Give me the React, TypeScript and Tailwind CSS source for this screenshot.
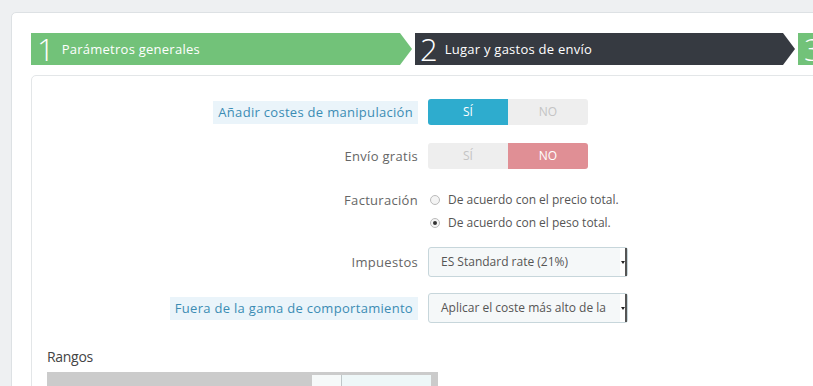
import { ReactNode } from 'react';

const font = { fontFamily: '"Open Sans", "Liberation Sans", sans-serif' };

function Step({ n, label, dark, last }: { n: string; label: string; dark?: boolean; last?: boolean }) {
  const bg = dark ? 'bg-[#363a41]' : 'bg-[#72c279]';
  const tri = dark ? 'border-l-[#363a41]' : 'border-l-[#72c279]';
  return (
    <div className="flex h-[32px] shrink-0">
      <div className={`flex items-center ${bg} ${last ? 'w-[40px] pl-[6px]' : dark ? 'w-[368px] pl-[5px]' : 'w-[369px] pl-[6px]'} text-white`}>
        <span className="text-[31px] font-light leading-none">{n}</span>
        {label && <span className="ml-[7px] text-[13px] leading-none tracking-[0.25px]">{label}</span>}
      </div>
      {!last && (
        <div className={`h-0 w-0 border-y-[16px] border-y-transparent border-l-[12px] ${tri}`} />
      )}
    </div>
  );
}

function Label({ children, hint }: { children: ReactNode; hint?: boolean }) {
  return (
    <div className="flex w-[386px] shrink-0 justify-end tracking-[0.3px]">
      {hint ? (
        <span className="bg-[#eaf4fa] px-[5px] py-[3px] leading-[17px] text-[#3b8cb4]">{children}</span>
      ) : (
        <span className="leading-[20px] text-[#666]">{children}</span>
      )}
    </div>
  );
}

function Toggle({ yes }: { yes: boolean }) {
  return (
    <div className="ml-[10px] flex h-[26px] w-[160px] overflow-hidden rounded-[3px] text-[12px]">
      <div
        className={`flex w-[80px] items-center justify-center ${yes ? 'bg-[#2eacce] text-white' : 'bg-[#eee] text-[#c4c4c4]'}`}
      >
        SÍ
      </div>
      <div
        className={`flex w-[80px] items-center justify-center ${yes ? 'bg-[#eee] text-[#c4c4c4]' : 'bg-[#e08f95] text-white'}`}
      >
        NO
      </div>
    </div>
  );
}

function Radio({ checked, children }: { checked?: boolean; children: ReactNode }) {
  return (
    <div className="flex h-[23px] items-center text-[12px] text-[#555]">
      <span className="ml-[2px] flex h-[10px] w-[10px] items-center justify-center rounded-full border border-[#bbb] bg-[#f4f4f4]">
        {checked && <span className="h-[4px] w-[4px] rounded-full bg-[#333]" />}
      </span>
      <span className="ml-[8px]">{children}</span>
    </div>
  );
}

function Select({ value }: { value: string }) {
  return (
    <div className="relative ml-[10px] flex h-[30px] w-[200px] items-center rounded-[3px] border border-[#c7d6db] bg-[#f5f8f9] pl-[12px] text-[12px] text-[#555]">
      {value}
      <div className="absolute right-0 top-0 flex h-full w-[7px] items-center justify-center border-r-2 border-[#555] bg-white">
        <div className="h-0 w-0 border-x-[2px] border-t-[3px] border-x-transparent border-t-[#222]" />
      </div>
    </div>
  );
}

export default function App() {
  return (
    <div className="h-[386px] w-[813px] overflow-hidden bg-[#eef0f2] pl-[11px] pt-[12px] text-[13px]" style={font}>
      <div className="h-[400px] w-[900px] rounded-tl-[5px] border border-[#dde1e4] bg-white pl-[19px] pt-[20px]">
        <div className="flex gap-[3px]">
          <Step n="1" label="Parámetros generales" />
          <Step n="2" label="Lugar y gastos de envío" dark />
          <Step n="3" label="" last />
        </div>

        <div className="mt-[10px] h-[320px] rounded-tl-[5px] border border-[#e3e6e8] bg-white pt-[23px]">
          <div className="flex h-[26px] items-center">
            <Label hint>Añadir costes de manipulación</Label>
            <Toggle yes />
          </div>

          <div className="mt-[18px] flex h-[26px] items-center">
            <Label>Envío gratis</Label>
            <Toggle yes={false} />
          </div>

          <div className="mt-[19px] flex">
            <div className="flex h-[23px] items-center">
              <Label>Facturación</Label>
            </div>
            <div className="ml-[10px] flex flex-col">
              <Radio>De acuerdo con el precio total.</Radio>
              <Radio checked>De acuerdo con el peso total.</Radio>
            </div>
          </div>

          <div className="mt-[13px] flex h-[30px] items-center">
            <Label>Impuestos</Label>
            <Select value="ES Standard rate (21%)" />
          </div>

          <div className="mt-[16px] flex h-[30px] items-center">
            <Label hint>Fuera de la gama de comportamiento</Label>
            <Select value="Aplicar el coste más alto de la" />
          </div>

          <div className="ml-[15px] mt-[24px]">
            <div className="text-[14px] leading-[20px] tracking-[-0.3px] text-[#444]">Rangos</div>
            <div className="mt-[5px] flex h-[30px] w-[391px] bg-[#cbcbcb] pl-[265px] pt-[3px]">
              <div className="h-full w-[30px] border-r border-[#bfc7c9] bg-[#f6f9f9]" />
              <div className="h-full w-[89px] bg-[#eef7f8]" />
            </div>
          </div>
        </div>
      </div>
    </div>
  );
}
